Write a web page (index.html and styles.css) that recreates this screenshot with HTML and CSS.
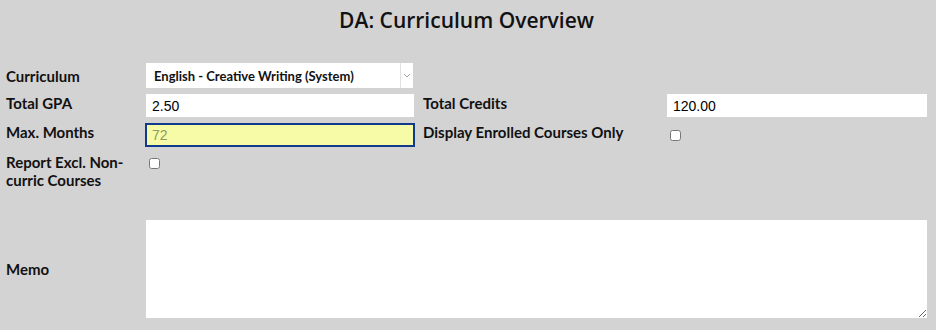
FILE: index.html
```html
<!DOCTYPE html>
<html lang="en">
<head>
    <meta charset="UTF-8">
    <meta name="viewport" content="width=device-width, initial-scale=1.0">
    <title>DA: Curriculum Overview</title>
    <link rel="stylesheet" href="styles.css">
</head>
<body>

    <h1 class="title">DA: Curriculum Overview</h1>

    <form class="form">
        <label class="label label-first">Curriculum</label>
        <div class="select">
            <span class="select-text">English - Creative Writing (System)</span>
            <span class="select-arrow">
                <svg width="8" height="5" viewBox="0 0 8 5"><path d="M1 1 L4 4 L7 1" fill="none" stroke="#a9a9a9" stroke-width="1"/></svg>
            </span>
        </div>
        <div></div>
        <div></div>

        <label class="label label-top">Total GPA</label>
        <input class="input" type="text" value="2.50">
        <label class="label label-top label-right">Total Credits</label>
        <input class="input" type="text" value="120.00">

        <label class="label label-top">Max. Months</label>
        <input class="input input-focus" type="text" value="72">
        <label class="label label-top label-right">Display Enrolled Courses Only</label>
        <div class="check-cell"><input class="check" type="checkbox"></div>

        <label class="label label-wrap">Report Excl. Non-curric Courses</label>
        <div class="check-cell check-top"><input class="check" type="checkbox"></div>
        <div></div>
        <div></div>

        <label class="label">Memo</label>
        <textarea class="memo"></textarea>
    </form>

</body>
</html>
```

FILE: styles.css
```css
body {
    margin: 0;
    padding: 0 9px 0 6px;
    background-color: #d3d3d3;
    font-family: "Lato", "Liberation Sans", sans-serif;
    color: #111;
}

.title {
    margin: 0;
    padding-top: 6px;
    height: 56px;
    box-sizing: border-box;
    text-align: center;
    font-family: "Open Sans", "Liberation Sans", sans-serif;
    font-size: 21px;
    font-weight: 600;
    color: #111;
}

.form {
    display: grid;
    grid-template-columns: 140px 268px 253px 260px;
    grid-template-rows: 25px 23px 24px 61px 98px;
    row-gap: 6px;
    margin-top: 7px;
}

.label {
    align-self: center;
    font-size: 15px;
    font-weight: 700;
    line-height: 18px;
}

.label-first {
    align-self: start;
    padding-top: 4px;
}

.label-top {
    align-self: start;
    padding-top: 0;
}

.label-right {
    padding-left: 9px;
}

.label-wrap {
    align-self: start;
    width: 130px;
}

.select {
    display: flex;
    align-items: center;
    background-color: #fff;
    width: 267px;
}

.select-text {
    flex: 1;
    padding-left: 8px;
    font-size: 13px;
    font-weight: 700;
}

.select-arrow {
    display: flex;
    align-items: center;
    justify-content: center;
    width: 12px;
    height: 100%;
    border-left: 1px solid #e2e2e2;
}

.input {
    box-sizing: border-box;
    width: 100%;
    height: 23px;
    margin: 0;
    padding: 0 6px;
    border: none;
    outline: 0;
    background-color: #fff;
    font-family: "Liberation Sans", Arial, sans-serif;
    font-size: 14px;
    color: #000;
}

.input-focus {
    height: 24px;
    width: 270px;
    margin-left: -1px;
    border: 2px solid #123a8c;
    background-color: #f7fba7;
    color: #8b9a5e;
    padding-left: 5px;
}

.check-cell {
    display: flex;
    align-items: center;
}

.check-top {
    align-items: flex-start;
}

.check {
    width: 11px;
    height: 11px;
    margin: 0 0 0 3px;
}

.check-top .check {
    margin-top: 5px;
}

.memo {
    grid-column: 2 / 5;
    box-sizing: border-box;
    height: 98px;
    border: none;
    outline: 0;
    background-color: #fff;
    resize: both;
}
```
